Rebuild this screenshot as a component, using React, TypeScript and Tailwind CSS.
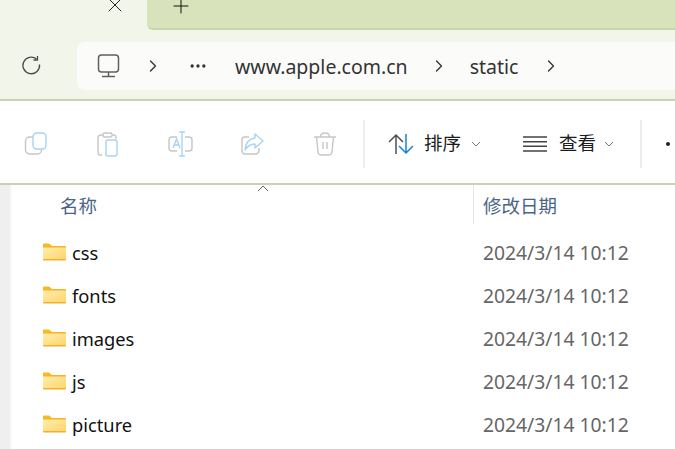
import { ChevronRight, Ellipsis, Plus, X } from "lucide-react";

const files = ["css", "fonts", "images", "js", "picture"];

function FolderIcon() {
    return (
        <svg width="23" height="18" viewBox="0 0 23 18" className="shrink-0">
            <defs>
                <linearGradient id="folderFill" x1="0" y1="0" x2="1" y2="1">
                    <stop offset="0" stopColor="#ffeeaa" />
                    <stop offset="1" stopColor="#fdd56f" />
                </linearGradient>
            </defs>
            <path d="M0 1.5 Q0 .5 1 .5 H6 L9 3 H22 Q23 3 23 4 V6 H0 Z" fill="#fbb91c" />
            <rect x="0" y="3.5" width="23" height="14" rx="1" fill="#f4b02a" />
            <rect x="0" y="4.5" width="23" height="11.5" fill="url(#folderFill)" />
        </svg>
    );
}

function ToolIcon({ children }: { children: React.ReactNode }) {
    return (
        <svg width="26" height="26" viewBox="0 0 26 26" fill="none" strokeWidth="1.4" className="shrink-0">
            {children}
        </svg>
    );
}

const grey = "#c6c6c6";
const blue = "#a9d3f5";

export default function App() {
    return (
        <div
            className="w-[675px] h-[449px] overflow-hidden flex flex-col bg-white"
            style={{ fontFamily: '"Noto Sans", "Noto Sans CJK SC", sans-serif' }}
        >
            {/* tab strip */}
            <div className="h-[30px] shrink-0 flex bg-[#f2f6ea] overflow-hidden">
                <div className="w-[147px] shrink-0 flex justify-end items-start pr-[20px]">
                    <X size={24} strokeWidth={1} className="text-[#222] -mt-[7px]" />
                </div>
                <div className="flex-1 bg-[#d8e3bc] rounded-bl-[6px] border-b-2 border-[#c9d4ae] pl-[22px]">
                    <Plus size={24} strokeWidth={1} className="text-[#111] -mt-[6px]" />
                </div>
            </div>

            {/* address row */}
            <div className="h-[71px] shrink-0 flex items-start bg-[#f2f5ea] border-b-2 border-[#c9d4ae] pt-[12px]">
                <div className="w-[77px] h-[48px] shrink-0 flex items-center pl-[21px]">
                    <svg width="22" height="22" viewBox="0 0 22 22" fill="none" stroke="#4a4a4a" strokeWidth="1.3">
                        <path d="M18.5 9.5 A8.3 8.3 0 1 1 15.5 4" />
                        <path d="M16.5 1 V5 H12.5" strokeLinejoin="round" />
                    </svg>
                </div>
                <div className="flex-1 h-[48px] bg-[#fbfcf9] rounded-l-[8px] flex items-center text-[19.5px] text-[#333] leading-none">
                    <svg width="24" height="24" viewBox="0 0 24 24" fill="none" stroke="#5f5f5f" strokeWidth="1.5" className="ml-[20px] shrink-0">
                        <rect x="1.5" y="1" width="20" height="17" rx="3" />
                        <path d="M11.5 18 V22 M5 22.5 H18" />
                    </svg>
                    <ChevronRight size={20} strokeWidth={1.6} className="ml-[22px] text-[#333] shrink-0" />
                    <Ellipsis size={20} strokeWidth={2} className="ml-[25px] text-[#333] shrink-0" />
                    <span className="ml-[27px] pt-[2px]">www.apple.com.cn</span>
                    <ChevronRight size={20} strokeWidth={1.6} className="ml-[21px] text-[#333] shrink-0" />
                    <span className="ml-[21px] pt-[2px]">static</span>
                    <ChevronRight size={20} strokeWidth={1.6} className="ml-[23px] text-[#333] shrink-0" />
                </div>
            </div>

            {/* toolbar */}
            <div className="h-[84px] shrink-0 flex items-center pt-[3px] border-b-2 border-[#c9d4ae] whitespace-nowrap text-[18.5px] text-[#1c1c1c]">
                <div className="flex items-center gap-[46px] pl-[24px]">
                    <ToolIcon>
                        <rect x="1.5" y="6" width="16" height="17" rx="4" stroke={grey} />
                        <rect x="9" y="2" width="13" height="16" rx="3.5" fill="white" stroke={blue} />
                    </ToolIcon>
                    <ToolIcon>
                        <path d="M16 4 H18 Q20 4 20 7 V8 M6 24 H4 Q2 24 2 21 V7 Q2 4 5 4 H7" stroke={grey} />
                        <rect x="7" y="2" width="9" height="4" rx="1.5" stroke={grey} />
                        <rect x="10" y="9" width="11" height="16" rx="2" stroke={blue} />
                    </ToolIcon>
                    <ToolIcon>
                        <path d="M9 6 H4 Q1 6 1 9 V17 Q1 20 4 20 H9 M17 6 H21 Q24 6 24 9 V17 Q24 20 21 20 H17" stroke={grey} />
                        <path d="M14 1 V25 M11 1 H17 M11 25 H17 M5 17 L8.5 8 L12 17 M6 14 H11" stroke={blue} />
                    </ToolIcon>
                    <ToolIcon>
                        <path d="M9 6 H5 Q2 6 2 9 V19 Q2 23 5 23 H15 Q19 23 19 19 V17" stroke={grey} />
                        <path d="M15 3 L23 10 L15 17 V13 Q9 13 5 19 Q6 8 15 7 Z" stroke={blue} strokeLinejoin="round" />
                    </ToolIcon>
                    <ToolIcon>
                        <path d="M2 6 H24 M8.5 6 Q8.5 2 13 2 Q17.5 2 17.5 6 M4.5 6 L6 21 Q6.5 24 9 24 H17 Q19.5 24 20 21 L21.5 6 M11 11 V18 M15 11 V18" stroke={grey} />
                    </ToolIcon>
                </div>
                <div className="w-[2px] h-[48px] bg-[#ececec] ml-[25px] shrink-0" />
                <svg width="26" height="24" viewBox="0 0 26 24" fill="none" strokeWidth="1.5" className="ml-[23px] shrink-0">
                    <path d="M8 22 V3 M1 10 L8 3 L15 10" stroke="#505050" />
                    <path d="M18 2 V21 M11 14 L18 21 L25 14" stroke="#1383d8" />
                </svg>
                <span className="ml-[10px] leading-none">排序</span>
                <svg width="10" height="6" viewBox="0 0 10 6" fill="none" stroke="#777" strokeWidth="1" className="ml-[10px] shrink-0">
                    <path d="M1 1 L5 5 L9 1" />
                </svg>
                <svg width="24" height="16" viewBox="0 0 24 16" fill="none" stroke="#444" strokeWidth="1.4" className="ml-[42px] shrink-0">
                    <path d="M0 1 H24 M0 5.7 H24 M0 10.3 H24 M0 15 H24" />
                </svg>
                <span className="ml-[12px] leading-none">查看</span>
                <svg width="10" height="6" viewBox="0 0 10 6" fill="none" stroke="#777" strokeWidth="1" className="ml-[8px] shrink-0">
                    <path d="M1 1 L5 5 L9 1" />
                </svg>
                <div className="w-[2px] h-[48px] bg-[#ececec] ml-[26px] shrink-0" />
                <div className="flex items-center gap-[5px] ml-[24px] shrink-0">
                    <span className="w-[4px] h-[4px] rounded-full bg-[#222]" />
                    <span className="w-[4px] h-[4px] rounded-full bg-[#222]" />
                </div>
            </div>

            {/* file list */}
            <div className="flex-1 flex min-h-0">
                <div className="w-[10px] shrink-0 bg-[#efefef] border-r-2 border-[#f8f8f8] box-content" />
                <div className="flex-1 min-w-0">
                    <div className="relative h-[39px] mb-[7px] flex text-[18.5px] text-[#4a6584] leading-none">
                        <div className="w-[461px] shrink-0 flex items-center pl-[48px] pt-[3px]">名称</div>
                        <div className="border-l border-[#e5e5e5] flex items-center pl-[9px] pt-[3px]">修改日期</div>
                        <svg width="12" height="7" viewBox="0 0 12 7" fill="none" stroke="#666" strokeWidth="1" className="absolute left-[245px] top-0">
                            <path d="M1 6 L6 1 L11 6" />
                        </svg>
                    </div>
                    {files.map((name) => (
                        <div key={name} className="h-[43px] flex items-center leading-none">
                            <div className="w-[461px] shrink-0 flex items-center pl-[31px] gap-[6px] text-[18.3px] text-[#111]">
                                <FolderIcon />
                                <span className="pt-[2px]">{name}</span>
                            </div>
                            <div className="pl-[10px] pt-[1px] text-[19.3px] text-[#666] whitespace-nowrap">2024/3/14 10:12</div>
                        </div>
                    ))}
                </div>
            </div>
        </div>
    );
}
